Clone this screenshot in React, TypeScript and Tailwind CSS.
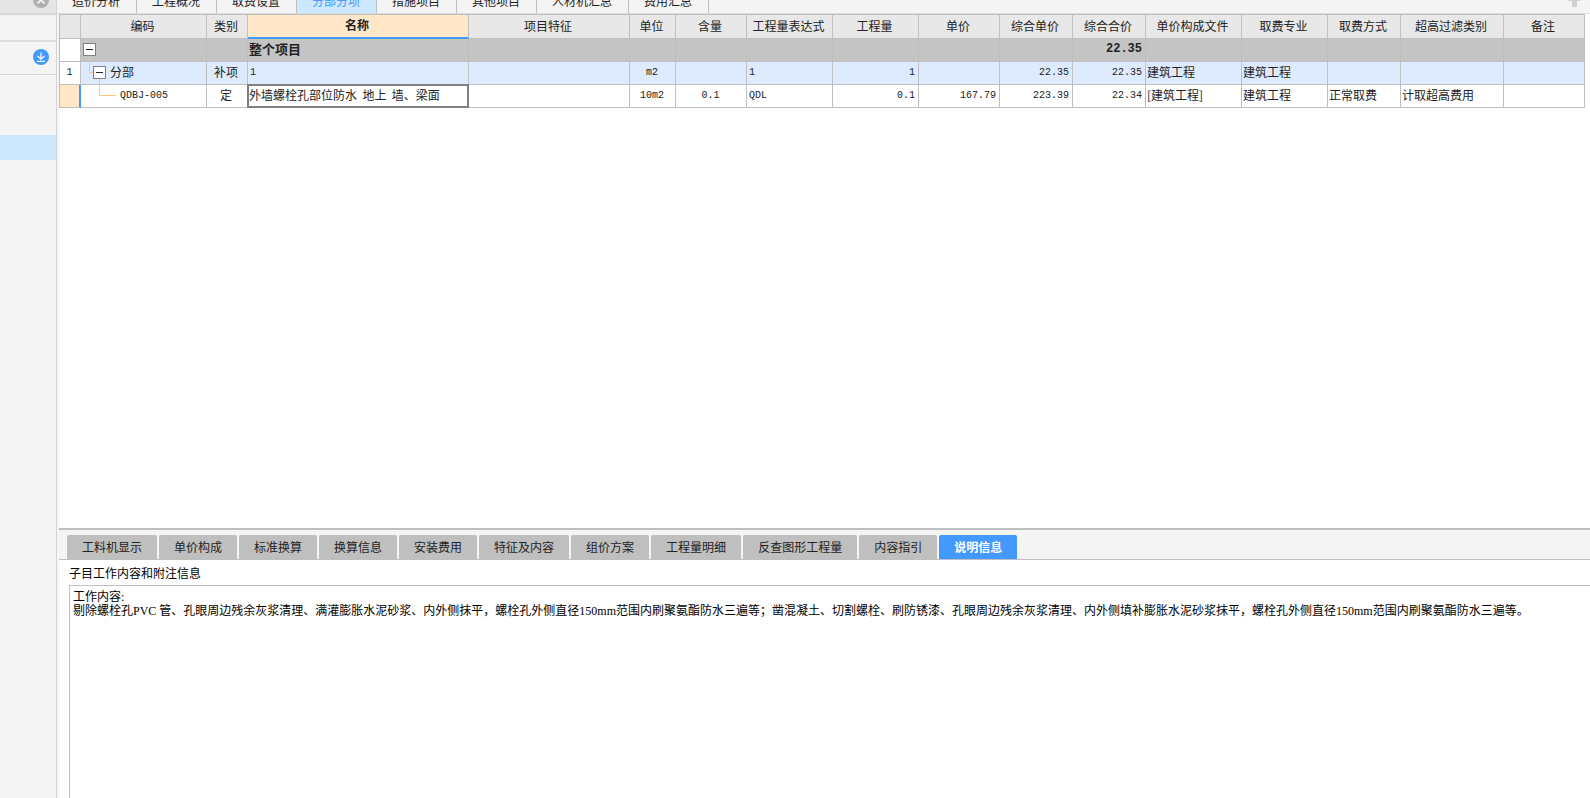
import React from "react";
import clsx from "clsx";

const topTabs = [
    "造价分析",
    "工程概况",
    "取费设置",
    "分部分项",
    "措施项目",
    "其他项目",
    "人材机汇总",
    "费用汇总",
];

const detailTabs = [
    "工料机显示",
    "单价构成",
    "标准换算",
    "换算信息",
    "安装费用",
    "特征及内容",
    "组价方案",
    "工程量明细",
    "反查图形工程量",
    "内容指引",
    "说明信息",
];

const columns = [
    { name: "", width: "w-[21px]" },
    { name: "编码", width: "w-[126px]" },
    { name: "类别", width: "w-[41px]" },
    { name: "名称", width: "w-[221px]" },
    { name: "项目特征", width: "w-[161px]" },
    { name: "单位", width: "w-[46px]" },
    { name: "含量", width: "w-[71px]" },
    { name: "工程量表达式", width: "w-[86px]" },
    { name: "工程量", width: "w-[86px]" },
    { name: "单价", width: "w-[81px]" },
    { name: "综合单价", width: "w-[73px]" },
    { name: "综合合价", width: "w-[73px]" },
    { name: "单价构成文件", width: "w-[96px]" },
    { name: "取费专业", width: "w-[86px]" },
    { name: "取费方式", width: "w-[73px]" },
    { name: "超高过滤类别", width: "w-[103px]" },
    { name: "备注", width: "" },
];

const note =
    "工作内容:\n剔除螺栓孔PVC 管、孔眼周边残余灰浆清理、满灌膨胀水泥砂浆、内外侧抹平，螺栓孔外侧直径150mm范围内刷聚氨酯防水三遍等；凿混凝土、切割螺栓、刷防锈漆、孔眼周边残余灰浆清理、内外侧填补膨胀水泥砂浆抹平，螺栓孔外侧直径150mm范围内刷聚氨酯防水三遍等。";

type CellProps = {
    children?: React.ReactNode;
    align?: "left" | "center" | "right";
    mono?: boolean;
    className?: string;
};

const Cell: React.FC<CellProps> = ({
    children,
    align = "left",
    mono,
    className,
}) => (
    <td
        className={clsx(
            "relative h-[23px] border-r border-b border-[#bfbfbf] pt-0 pr-[3px] whitespace-nowrap",
            align === "center" && "text-center",
            align === "right" && "text-right",
            mono
                ? "pb-0 pl-0.5 font-['Liberation_Mono',monospace] text-[10px]"
                : "pb-0.5 pl-px",
            className
        )}
    >
        {children}
    </td>
);

// Collapse button of a tree row
const Toggle: React.FC<{ label: string }> = ({ label }) => (
    <button
        aria-label={label}
        className="relative flex h-[13px] w-[13px] shrink-0 items-center justify-center border border-[#808080] bg-white"
    >
        <span className="h-px w-[7px] bg-[#222]" />
    </button>
);

// Orange connector lines of the tree
const Branch: React.FC<{ d: string }> = ({ d }) => (
    <svg
        className="absolute top-0 left-0 h-[23px] w-10"
        viewBox="0 0 40 23"
        fill="none"
        stroke="#ffc67d"
        shapeRendering="crispEdges"
    >
        <path d={d} />
    </svg>
);

const Sidebar: React.FC = () => (
    <aside className="flex w-[57px] shrink-0 flex-col border-r border-[#d4d4d4] bg-[#f4f4f4]">
        <div className="flex h-[15px] items-end justify-end overflow-hidden border-b-2 border-[#d8d8d8] bg-[#e6e6e6] pr-[7px]">
            <button aria-label="关闭" className="mb-[5px]">
                <svg width="16" height="16" viewBox="0 0 16 16">
                    <circle cx="8" cy="8" r="8" fill="#b0b0b0" />
                    <path
                        d="M4.5 4.5l7 7M11.5 4.5l-7 7"
                        stroke="#fff"
                        strokeWidth="1.6"
                    />
                </svg>
            </button>
        </div>
        <div className="h-[27px] border-b-2 border-[#dcdcdc]" />
        <div className="flex h-[33px] items-center justify-end border-b border-[#d4d4d4] pr-[7px] pb-0.5">
            <button aria-label="展开">
                <svg width="16" height="16" viewBox="0 0 16 16">
                    <circle cx="8" cy="8" r="8" fill="#4499ff" />
                    <path
                        d="M8 3.5v6.5M4.5 7L8 10.3 11.5 7M4 12.3h8"
                        stroke="#fff"
                        strokeWidth="1.2"
                        fill="none"
                    />
                </svg>
            </button>
        </div>
        <div className="mt-[60px] h-[25px] bg-[#cce8ff]" />
    </aside>
);

const BudgetTable: React.FC = () => (
    <table className="w-full table-fixed border-separate border-spacing-0 border-t border-l border-[#bfbfbf] text-[#222]">
        <colgroup>
            {columns.map((col, ind) => (
                <col key={ind} className={col.width} />
            ))}
        </colgroup>
        <thead>
            <tr>
                {columns.map((col, ind) => (
                    <th
                        key={ind}
                        className={clsx(
                            "h-6 border-r border-b border-r-[#bfbfbf] p-0 pr-0.5 pb-0.5 whitespace-nowrap",
                            col.name === "名称"
                                ? "border-b-2 border-b-[#4499ff] bg-[#ffe7c8] font-bold"
                                : "border-b-[#bfbfbf] bg-[#e8e8e8] font-normal"
                        )}
                    >
                        {col.name}
                    </th>
                ))}
            </tr>
        </thead>
        <tbody>
            {/* Whole project */}
            <tr className="bg-[#c4c4c4] font-bold">
                <Cell className="bg-white" />
                <Cell>
                    <Branch d="M8.5 17v6" />
                    <div className="flex h-4 items-center pl-px">
                        <Toggle label="整个项目" />
                    </div>
                </Cell>
                <Cell />
                <Cell>
                    <span className="text-[13px]">整个项目</span>
                </Cell>
                <Cell />
                <Cell />
                <Cell />
                <Cell />
                <Cell />
                <Cell />
                <Cell />
                <Cell
                    align="right"
                    className="font-['Liberation_Mono',monospace]"
                >
                    22.35
                </Cell>
                <Cell />
                <Cell />
                <Cell />
                <Cell />
                <Cell />
            </tr>
            {/* Section */}
            <tr className="bg-[#deebff]">
                <Cell align="center" mono className="bg-white">
                    1
                </Cell>
                <Cell>
                    <Branch d="M8.5 0v10.5h4M18.5 17v6" />
                    <div className="flex items-center gap-1 pl-[11px]">
                        <Toggle label="分部" />
                        分部
                    </div>
                </Cell>
                <Cell align="center">补项</Cell>
                <Cell mono>1</Cell>
                <Cell />
                <Cell align="center" mono>
                    m2
                </Cell>
                <Cell />
                <Cell mono>1</Cell>
                <Cell align="right" mono>
                    1
                </Cell>
                <Cell />
                <Cell align="right" mono>
                    22.35
                </Cell>
                <Cell align="right" mono>
                    22.35
                </Cell>
                <Cell>建筑工程</Cell>
                <Cell>建筑工程</Cell>
                <Cell />
                <Cell />
                <Cell />
            </tr>
            {/* Quota item */}
            <tr className="bg-white">
                <Cell className="border-r-2 border-r-[#4499ff] bg-[#ffe7c8]" />
                <Cell mono>
                    <Branch d="M18.5 0v10.5h16.5" />
                    <span className="pl-[37px]">QDBJ-005</span>
                </Cell>
                <Cell align="center">定</Cell>
                <Cell>
                    <span className="pointer-events-none absolute -inset-px border-2 border-[#808080]" />
                    外墙螺栓孔部位防水&nbsp; 地上&nbsp; 墙、梁面
                </Cell>
                <Cell />
                <Cell align="center" mono>
                    10m2
                </Cell>
                <Cell align="center" mono>
                    0.1
                </Cell>
                <Cell mono>QDL</Cell>
                <Cell align="right" mono>
                    0.1
                </Cell>
                <Cell align="right" mono>
                    167.79
                </Cell>
                <Cell align="right" mono>
                    223.39
                </Cell>
                <Cell align="right" mono>
                    22.34
                </Cell>
                <Cell>[建筑工程]</Cell>
                <Cell>建筑工程</Cell>
                <Cell>正常取费</Cell>
                <Cell>计取超高费用</Cell>
                <Cell />
            </tr>
        </tbody>
    </table>
);

const App: React.FC = () => {
    return (
        <div className="flex h-screen overflow-hidden bg-[#f4f4f4] font-['Noto_Sans_CJK_SC',sans-serif] text-xs leading-4 text-black">
            <Sidebar />
            <main className="flex min-w-0 flex-1 flex-col">
                {/* Page tabs */}
                <nav className="flex h-3.5 items-end overflow-hidden border-b border-[#dcdcdc]">
                    {topTabs.map((tab) => (
                        <button
                            key={tab}
                            className={clsx(
                                "h-6 shrink-0 border-r border-[#bfbfbf] pr-4 pl-[15px]",
                                tab === "分部分项"
                                    ? "bg-[#cce8ff] text-[#4499ff]"
                                    : "text-[#222]"
                            )}
                        >
                            {tab}
                        </button>
                    ))}
                    <button
                        aria-label="上移"
                        className="mr-[9px] mb-1.5 ml-auto"
                    >
                        <svg width="13" height="14" viewBox="0 0 13 14">
                            <path
                                d="M6.5 0L13 8H9v6H4V8H0z"
                                fill="#d0d0d0"
                            />
                        </svg>
                    </button>
                </nav>

                <section className="ml-0.5 min-h-0 flex-1 bg-white pr-[5px]">
                    <BudgetTable />
                </section>

                {/* Detail panel */}
                <section className="ml-0.5 flex h-[270px] flex-col border-t-2 border-[#bfbfbf] bg-white">
                    <nav className="flex h-[30px] shrink-0 items-end gap-0.5 border-b border-[#bfbfbf] bg-[#f4f4f4] pl-2">
                        {detailTabs.map((tab) => (
                            <button
                                key={tab}
                                className={clsx(
                                    "h-6 shrink-0 rounded-t-xs px-[15px]",
                                    tab === "说明信息"
                                        ? "bg-[#4499ff] font-bold text-white"
                                        : "bg-[#bfbfbf] text-[#222]"
                                )}
                            >
                                {tab}
                            </button>
                        ))}
                    </nav>
                    <label htmlFor="note" className="px-2.5 pt-[5px] pb-1">
                        子目工作内容和附注信息
                    </label>
                    <textarea
                        id="note"
                        readOnly
                        defaultValue={note}
                        className="ml-2.5 flex-1 resize-none overflow-hidden border-t border-l border-[#bfbfbf] px-[3px] pt-1 font-['Liberation_Serif','Noto_Sans_CJK_SC',serif] text-xs leading-[14px] outline-none"
                    />
                </section>
            </main>
        </div>
    );
};

export default App;
